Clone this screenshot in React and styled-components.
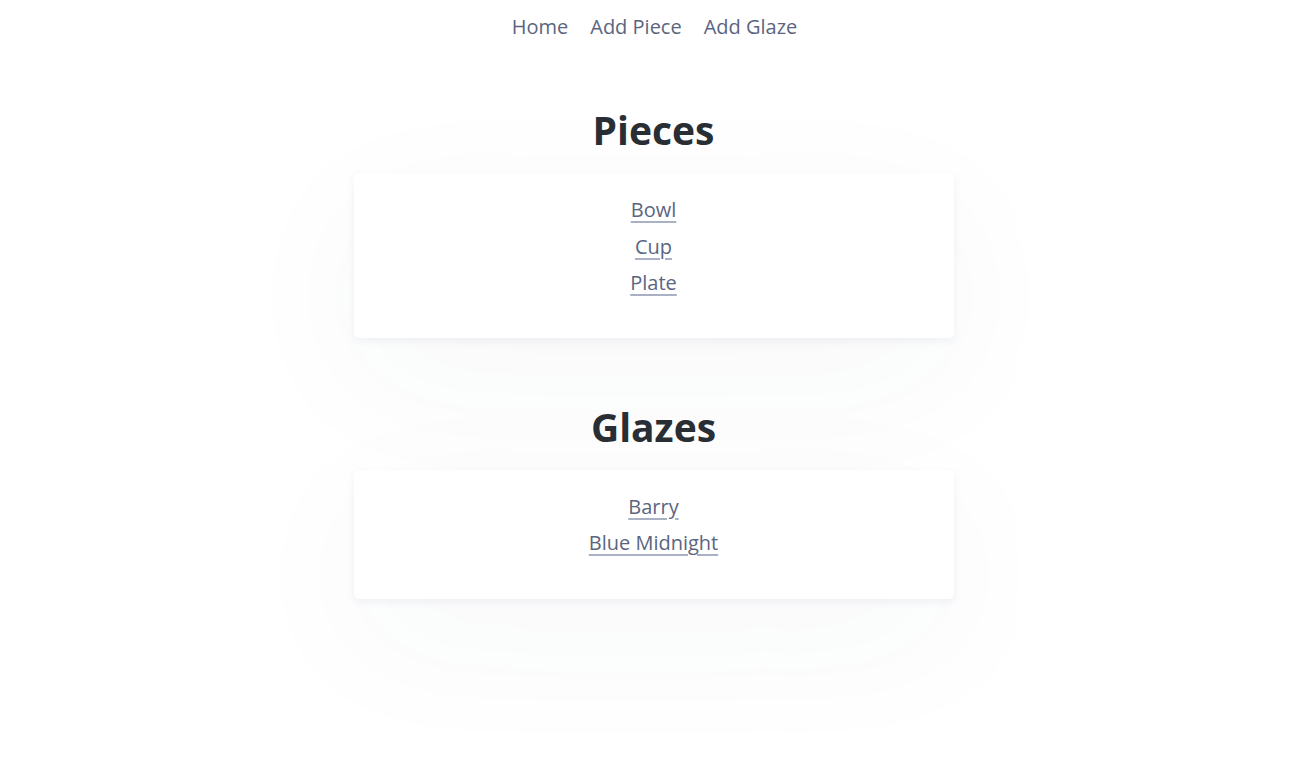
import React from "react";
import styled, { createGlobalStyle } from "styled-components";

const Global = createGlobalStyle`
  html, body { margin: 0; padding: 0; background: #ffffff; }
  body { font-family: "Open Sans", "Noto Sans", sans-serif; color: #2a2f36; }
`;

const Page = styled.div`
  display: flex;
  flex-direction: column;
  align-items: center;
  min-height: 781px;
`;

const Nav = styled.nav`
  display: flex;
  gap: 22px;
  padding-top: 12px;
  height: 30px;
  align-items: center;
  padding-left: 2px;
`;

const NavLink = styled.a`
  font-size: 20px;
  color: #5b6580;
  text-decoration: none;
  line-height: 30px;
`;

const Section = styled.section`
  display: flex;
  flex-direction: column;
  align-items: center;
  width: 600px;
  margin-top: ${(p) => p.$top}px;
`;

const Heading = styled.h1`
  margin: 0;
  font-size: 39px;
  font-weight: 700;
  line-height: 56px;
  color: #2a2f36;
`;

const Card = styled.div`
  box-sizing: border-box;
  width: 600px;
  margin-top: 15px;
  padding: 19px 0 ${(p) => p.$bottom}px;
  background: #fff;
  border-radius: 5px;
  box-shadow: 0 3px 8px rgba(60, 70, 110, 0.07), 0 40px 150px rgba(60, 70, 110, 0.04);
  display: flex;
  flex-direction: column;
  align-items: center;
`;

const ItemLink = styled.a`
  font-size: 20px;
  line-height: 36.5px;
  color: #5b6580;
  text-decoration: underline;
  text-decoration-color: #aab1c4;
  text-decoration-thickness: 2px;
  text-underline-offset: 4px;
`;

const sections = [
  { title: "Pieces", items: ["Bowl", "Cup", "Plate"], top: 60, bottom: 36 },
  { title: "Glazes", items: ["Barry", "Blue Midnight"], top: 61, bottom: 37 },
];

export default function App() {
  return (
    <>
      <Global />
      <Page>
        <Nav>
          <NavLink href="#">Home</NavLink>
          <NavLink href="#">Add Piece</NavLink>
          <NavLink href="#">Add Glaze</NavLink>
        </Nav>
        {sections.map((s) => (
          <Section key={s.title} $top={s.top}>
            <Heading>{s.title}</Heading>
            <Card $bottom={s.bottom}>
              {s.items.map((i) => (
                <ItemLink key={i} href="#">
                  {i}
                </ItemLink>
              ))}
            </Card>
          </Section>
        ))}
      </Page>
    </>
  );
}
